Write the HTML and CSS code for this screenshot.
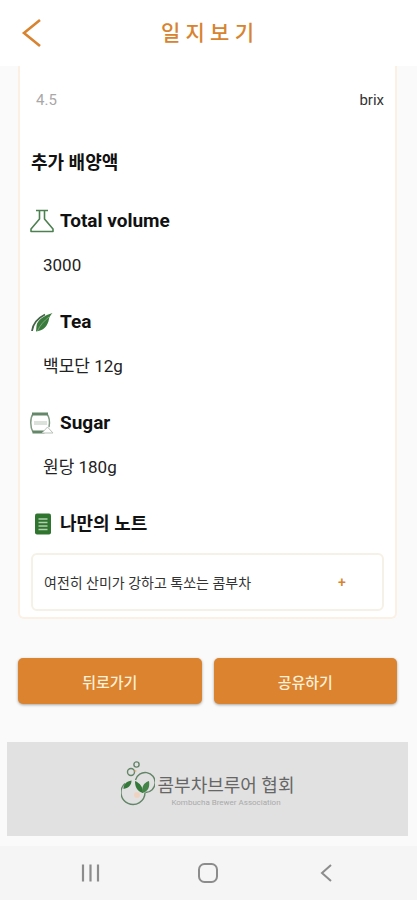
FILE: index.html
```html
<!DOCTYPE html>
<html lang="ko">
<head>
<meta charset="utf-8">
<meta name="viewport" content="width=device-width, initial-scale=1">
<title>일지보기</title>
<link rel="stylesheet" href="styles.css">
</head>
<body>
<header class="topbar">
  <button class="icon-button" type="button" aria-label="뒤로">
    <svg width="20" height="30" viewBox="0 0 20 30"><path d="M19 2 3 15l16 13" fill="none" stroke="#d8832f" stroke-width="2.600"/></svg>
  </button>
  <h1 class="title">일 지 보 기</h1>
</header>
<main class="content">
  <section class="card">
    <div class="measure">
      <input class="measure-input" id="brix" type="text" placeholder="4.5">
      <label class="measure-unit" for="brix">brix</label>
    </div>
    <h2 class="heading section-heading">추가 배양액</h2>
    <div class="entry">
      <h3 class="heading entry-heading">
        <svg class="icon" viewBox="0 0 24 24"><path d="M6 1.500h12M9.500 2v8L1 20v2.500h22V20L14.500 10V2" fill="none" stroke="#4c8050" stroke-width="1.600" stroke-linejoin="round"/></svg>
        Total volume
      </h3>
      <p class="value">3000</p>
    </div>
    <div class="entry">
      <h3 class="heading entry-heading">
        <svg class="icon" viewBox="0 0 24 24"><path d="M22.500 3C15 5 7 10 6.500 16L6 21.500C13 21 18 16 19 9c.5-3 2-4 3.500-6Z" fill="#397b3a"/><path d="M19 7C14 11 10 15 7.500 21" fill="none" stroke="#8fb38d" stroke-width=".8"/><path d="M15 4.500C8 8 3 13 2 21" fill="none" stroke="#46634a" stroke-width="1.800"/></svg>
        Tea
      </h3>
      <p class="value">백모단 12g</p>
    </div>
    <div class="entry">
      <h3 class="heading entry-heading">
        <svg class="icon" viewBox="0 0 24 24"><path d="M3 3C0 7 0 16 3 21M17 3c3 4 3 8 2 13" fill="none" stroke="#829b84" stroke-width="1.500"/><path d="M2 3h16M2.500 21h12" stroke="#638768" stroke-width="2.800"/><path d="M4 11h13M4 13h13" stroke="#b7c4b8" stroke-width="1"/><path d="m12 22 5.500-6 5.500 6Z" fill="#fff" stroke="#b9c1ba" stroke-width="1"/></svg>
        Sugar
      </h3>
      <p class="value">원당 180g</p>
    </div>
    <h3 class="heading">
      <svg class="icon" viewBox="0 0 24 24"><rect x="5" y="1.500" width="16" height="21" rx="2" fill="#2f752f"/><path d="M8.500 7h9M8.500 10.500h9M8.500 14h9M8.500 17.500h9" stroke="#b2cfb0" stroke-width="1.400"/></svg>
      나만의 노트
    </h3>
    <div class="note">
      <p class="note-text">여전히 산미가 강하고 톡쏘는 콤부차</p>
      <button class="note-more" type="button" aria-label="더보기">+</button>
    </div>
  </section>
  <div class="actions">
    <button class="action" type="button">뒤로가기</button>
    <button class="action" type="button">공유하기</button>
  </div>
</main>
<footer class="brand">
  <svg class="brand-mark" viewBox="0 0 34 46">
    <g fill="none" stroke="#638568" stroke-width="1.400">
      <circle cx="15.500" cy="3.500" r="2.600"/>
      <circle cx="10" cy="11" r="3.500"/>
      <path d="M14.500 19a10 10 0 1 1 10 12.500M4 22.500a12 12 0 1 0 20 9"/>
    </g>
    <circle cx="16" cy="34" r="3" fill="#efd3c1"/>
    <path d="M2.500 28c0-5 3-7.500 8-8.500 0 5-3 7.500-8 8.500ZM22 32c-6-2-8-6-8-12 5 2 8 6 8 12Z" fill="#34783a"/>
    <path d="M21 32c0-6 1-10 7-12 1 6-1 11-7 12Z" fill="#438447"/>
    <circle cx="14.500" cy="10" r="1" fill="#e9b68d"/>
  </svg>
  <div class="brand-text">
    <p class="brand-name">콤부차브루어 협회</p>
    <p class="brand-sub">Kombucha Brewer Association</p>
  </div>
</footer>
<nav class="system-nav" aria-label="시스템">
  <button class="icon-button" type="button" aria-label="최근 앱"><svg width="24" height="24" viewBox="0 0 24 24"><path d="M5 3.500v17M12.500 3.500v17M20 3.500v17" stroke="#8c8c8c" stroke-width="2.200"/></svg></button>
  <button class="icon-button" type="button" aria-label="홈"><svg width="24" height="24" viewBox="0 0 24 24"><rect x="3" y="3" width="18" height="18" rx="5.500" fill="none" stroke="#8c8c8c" stroke-width="2"/></svg></button>
  <button class="icon-button" type="button" aria-label="이전"><svg width="24" height="24" viewBox="0 0 24 24"><path d="m16 4-9 8 9 8" fill="none" stroke="#8c8c8c" stroke-width="2"/></svg></button>
</nav>
</body>
</html>
```

FILE: styles.css
```css
* {
  box-sizing: border-box;
}

body,
h1,
h2,
h3,
p {
  margin: 0;
}

body {
  background: #fafafa;
  color: #111;
  font-family: Roboto, "Noto Sans CJK KR", sans-serif;
}

button,
input {
  padding: 0;
  border: 0;
  background: none;
  font-family: inherit;
}

svg {
  display: block;
}

.topbar {
  display: grid;
  grid-template-columns: 24px 1fr 24px;
  align-items: center;
  height: 66px;
  padding: 0 21px 0 19px;
  background: #fff;
}

.icon-button {
  display: flex;
  justify-content: center;
}

.title {
  color: #d8832f;
  font-size: 21px;
  font-weight: 500;
  line-height: 32px;
  text-align: center;
}

.content {
  padding: 0 20px 0 18px;
}

.card {
  padding: 0 11px 6px;
  border: 2px solid #fbf0e3;
  border-top: 0;
  border-radius: 0 0 6px 6px;
  background: #fff;
}

.measure {
  display: flex;
  align-items: center;
  height: 67px;
  padding-left: 5px;
}

.measure-input {
  flex: 1;
  min-width: 0;
  font-size: 15px;
}

.measure-input::placeholder {
  color: #a8a8a8;
}

.measure-unit {
  color: #333;
  font-size: 15px;
}

.heading {
  display: flex;
  align-items: center;
  gap: 6px;
  font-size: 18px;
  font-weight: 700;
  line-height: 32px;
}

.entry-heading {
  font-size: 19px;
}

.section-heading {
  margin: 14px 0 26px;
}

.icon {
  width: 24px;
  height: 24px;
  margin-left: -1px;
}

.entry {
  margin-bottom: 29px;
}

.value {
  margin-top: 16px;
  padding-left: 12px;
  color: #222;
  font-size: 17px;
  line-height: 24px;
}

.note {
  display: flex;
  align-items: center;
  height: 58px;
  margin-top: 13px;
  padding: 0 32px 0 11px;
  border: 2px solid #f6f1e6;
  border-radius: 6px;
}

.note-text {
  flex: 1;
  color: #333;
  font-size: 14px;
}

.note-more {
  width: 16px;
  color: #d8832f;
  font-size: 14px;
  font-weight: 500;
}

.actions {
  display: grid;
  grid-template-columns: 1fr 1fr;
  gap: 12px;
  margin-top: 39px;
}

.action {
  height: 46px;
  border-radius: 5px;
  background: #dc832f;
  box-shadow: 0 1px 3px rgba(0, 0, 0, 0.35);
  color: #fff0d8;
  font-size: 15px;
  font-weight: 500;
}

.brand {
  display: flex;
  justify-content: center;
  gap: 3px;
  height: 94px;
  margin: 38px 9px 10px 7px;
  padding-top: 19px;
  background: #e1e1e1;
}

.brand-mark {
  width: 34px;
  height: 46px;
}

.brand-text {
  padding-top: 13px;
  text-align: center;
}

.brand-name {
  color: #666;
  font-size: 18px;
  line-height: 24px;
}

.brand-sub {
  color: #aaa;
  font-size: 8px;
  line-height: 9px;
}

.system-nav {
  display: grid;
  grid-template-columns: 1fr 1fr 1fr;
  align-items: center;
  height: 54px;
  padding: 0 31px;
  background: #f5f5f5;
}
```
